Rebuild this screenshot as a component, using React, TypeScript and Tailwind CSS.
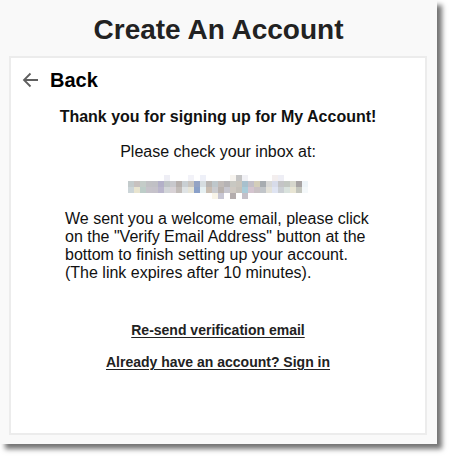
const blurRows: { x: number; y: number; c: string }[] = [];

// pixelated (redacted) email address, drawn as mosaic blocks
const top = ["", "", "", "", "", "", "#eeeef5", "", "", "", "#f2f2f8", "", "#eef0f8", "", "", "", "", "#f6f3ee", "#c4c4c4", "#f1f1f5", "", "", "", "", "#f3eeee", "#eeeef5", "", "", "", ""];
const row1 = ["#c3cbcc", "#c7c1bf", "#c4ccc8", "#c1c1c4", "#c0c0c5", "#b3b0c8", "#bfc4c6", "#c8c8cc", "#b7b0ad", "#c9cfd3", "#c9c5c0", "#94a3c4", "#d6dde0", "#b9b5b2", "#bec7cb", "#c1bbb8", "#b6b3b5", "#c8c8c2", "#c9c5bd", "#a8c0cd", "#c3bfc8", "#d3cdb9", "#a7acb0", "#d8d8d6", "#d7dbe9", "#c4c4c6", "#c2c7c1", "#d6d6cc", "#a7a3a3", "#eef4f8"];
const row2 = ["#ccd5d8", "#e8e4cf", "#bdcdc8", "#c6c3ca", "#c5c2ca", "#bab6cc", "#d2d5d8", "#d8d2d6", "#c2bcb8", "#dfe3e5", "#e6e4d7", "#8aa0c8", "#e6f0f2", "#c9bdb1", "#cacbcf", "#b9b2ae", "#c7c6ce", "#cfc9c2", "#c5c1ba", "#a9ccd9", "#d4c4cf", "#c9c1c4", "#c1c5c9", "#e3e1d8", "#dfe4f2", "#cbcfd4", "#d9e2dd", "#e8e5d4", "#c3c5bd", "#f4f8fa"];
const bottom = ["", "", "", "", "", "", "", "", "", "", "", "", "", "", "#f8f4e8", "#c8c7d4", "", "#b4adad", "", "#c4c0c8", "", "", "", "", "", "", "", "", "", ""];
[top, row1, row2, bottom].forEach((r, ry) =>
  r.forEach((c, rx) => {
    if (c) blurRows.push({ x: rx * 6, y: ry * 6, c });
  })
);

function BlurredEmail() {
  return (
    <svg width="182" height="24" viewBox="0 0 182 24" className="block">
      {blurRows.map((b, i) => (
        <rect key={i} x={b.x} y={b.y} width="6" height="6" fill={b.c} />
      ))}
    </svg>
  );
}

export default function App() {
  return (
    <div className="h-[459px] w-[453px] bg-white" style={{ fontFamily: '"Liberation Sans", Arial, sans-serif' }}>
      <div className="h-[444px] w-[437px] bg-[#f9f9f9] shadow-[5px_5px_5px_rgba(0,0,0,0.55)]">
        <h1 className="h-[56px] pt-[14px] text-center text-[28px] font-bold leading-[32px] text-[#222]">Create An Account</h1>

        <div className="ml-[9px] h-[379px] w-[418px] border-2 border-[#ececec] bg-white text-[#111]">
          <div className="mt-[10px] flex h-[24px] items-center pl-[11px]">
            <svg width="17" height="16" viewBox="0 0 17 16" fill="none" stroke="#5f5f5f" strokeWidth="1.8">
              <path d="M16 8H2M8.5 1.5L2 8l6.5 6.5" />
            </svg>
            <span className="ml-[11px] text-[20px] font-bold leading-[24px] text-black">Back</span>
          </div>

          <p className="mt-[16px] text-center text-[16px] font-bold leading-[18px]">Thank you for signing up for My Account!</p>
          <p className="mt-[17px] text-center text-[16px] leading-[18px]">Please check your inbox at:</p>
          <div className="mt-[14px] flex justify-center pl-[1px]">
            <BlurredEmail />
          </div>

          <p className="mx-auto mt-[11px] w-[306px] text-left text-[16px] leading-[18px]">
            We sent you a welcome email, please click on the "Verify Email Address" button at the bottom to finish setting up your account. (The link expires after 10 minutes).
          </p>

          <div className="mt-[40px] flex flex-col items-center gap-[16px] text-[14px] font-bold leading-[16px] text-[#222]">
            <a href="#" className="underline underline-offset-2">Re-send verification email</a>
            <a href="#" className="underline underline-offset-2">Already have an account? Sign in</a>
          </div>
        </div>
      </div>
    </div>
  );
}
